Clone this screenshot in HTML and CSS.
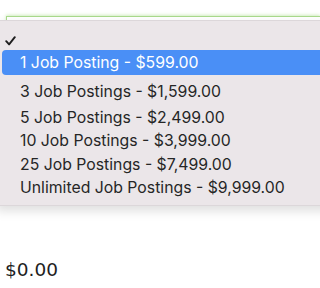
FILE: index.html
```html
<!DOCTYPE html>
<html>
<head>
<meta charset="utf-8">
<link rel="stylesheet" href="styles.css">
</head>
<body>
<div class="page">
  <div class="field"></div>
  <div class="menu">
    <div class="row check-row">
      <svg class="check" width="11" height="10" viewBox="0 0 11 10"><path d="M1.2 5.2 L4.1 8.4 L9.8 1.2" fill="none" stroke="#1e1e1e" stroke-width="1.9" stroke-linecap="round" stroke-linejoin="round"/></svg>
    </div>
    <div class="row selected">1 Job Posting - $599.00</div>
    <div class="row first">3 Job Postings - $1,599.00</div>
    <div class="row">5 Job Postings - $2,499.00</div>
    <div class="row">10 Job Postings - $3,999.00</div>
    <div class="row">25 Job Postings - $7,499.00</div>
    <div class="row">Unlimited Job Postings - $9,999.00</div>
  </div>
  <div class="total">$0.00</div>
</div>
</body>
</html>
```

FILE: styles.css
```css
html, body {
  margin: 0;
  padding: 0;
  height: 100%;
  overflow: hidden;
  background: #ffffff;
}

.page {
  position: relative;
  height: 100%;
  overflow: hidden;
}

.field {
  margin: 16px 0 0 6px;
  height: 20px;
  border-top: 1.5px solid #a9d98c;
  border-left: 1px solid #a9d98c;
  box-shadow: 0 -1px 3px rgba(150, 215, 110, 0.45);
}

.menu {
  position: absolute;
  top: 19.5px;
  left: -4px;
  right: -12px;
  height: 186.5px;
  box-sizing: border-box;
  background: #ebe6e9;
  border-top: 1px solid #dcd7da;
  border-bottom: 1px solid #dcd7da;
  box-shadow: 0 5px 10px rgba(0, 0, 0, 0.13);
  font-family: Inter, "Liberation Sans", sans-serif;
  font-size: 15.8px;
  color: #262626;
}

.row {
  height: 23.3px;
  line-height: 23.3px;
  padding-left: 24px;
  white-space: nowrap;
}

.check-row {
  height: 29px;
}

.check {
  display: block;
  padding-top: 15px;
  margin-left: -15px;
}

.selected {
  height: 25.5px;
  line-height: 25.5px;
  margin-left: 5.5px;
  padding-left: 18.5px;
  border-radius: 4px;
  background: #4a8ff6;
  color: #ffffff;
}

.first {
  height: 31px;
  line-height: 30px;
  padding-top: 1.5px;
  box-sizing: border-box;
}

.total {
  margin-top: 221.5px;
  margin-left: 5px;
  font-family: "DejaVu Sans", Verdana, sans-serif;
  font-size: 18.5px;
  line-height: 22px;
  color: #1e1e1e;
}
```
